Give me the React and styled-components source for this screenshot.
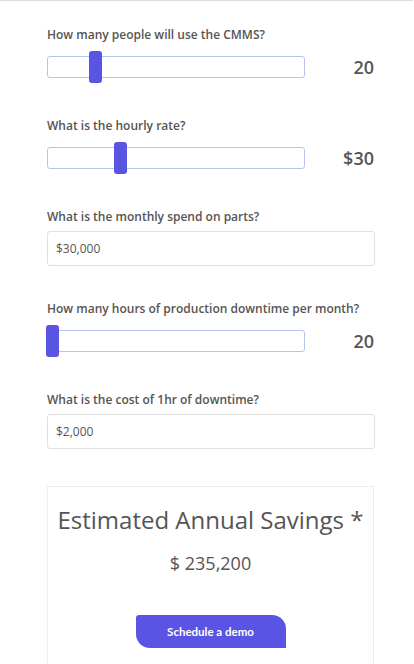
import React from 'react'
import styled, { createGlobalStyle } from 'styled-components'

const GlobalStyle = createGlobalStyle`
  * { box-sizing: border-box; }
  body {
    margin: 0;
    background: #ffffff;
    font-family: "Open Sans", "Noto Sans", sans-serif;
    color: #555555;
  }
`

const fields = [
  { kind: 'slider', label: 'How many people will use the CMMS?', value: '20', pos: 0.176 },
  { kind: 'slider', label: 'What is the hourly rate?', value: '$30', pos: 0.279 },
  { kind: 'input', label: 'What is the monthly spend on parts?', value: '$30,000' },
  { kind: 'slider', label: 'How many hours of production downtime per month?', value: '20', pos: 0 },
  { kind: 'input', label: 'What is the cost of 1hr of downtime?', value: '$2,000' },
]

export default function App() {
  return (
    <>
      <GlobalStyle />
      <Page>
        <Form>
          {fields.map((f) => (
            <Field key={f.label} $slider={f.kind === 'slider'}>
              <Label>{f.label}</Label>
              {f.kind === 'slider' ? (
                <SliderRow>
                  <Track>
                    <Thumb style={{ left: `calc(${f.pos} * (100% - 13px) - 2px)` }} />
                  </Track>
                  <Value>{f.value}</Value>
                </SliderRow>
              ) : (
                <TextInput defaultValue={f.value} />
              )}
            </Field>
          ))}
        </Form>
        <Card>
          <CardTitle>Estimated Annual Savings *</CardTitle>
          <Savings>$ 235,200</Savings>
          <DemoButton>Schedule a demo</DemoButton>
        </Card>
      </Page>
    </>
  )
}

const Page = styled.div`
  height: 664px;
  overflow: hidden;
  border-top: 1px solid #dcdcdc;
  margin-right: 1px;
  padding: 26px 40px 0 47px;
`

const Form = styled.div`
  display: flex;
  flex-direction: column;
  gap: 35px;
  width: 327px;
`

const Field = styled.div`
  display: flex;
  flex-direction: column;
  gap: ${(p) => (p.$slider ? '8px' : '6px')};
`

const Label = styled.div`
  font-size: 12px;
  line-height: 16px;
  font-weight: 600;
  color: #555555;
`

const SliderRow = styled.div`
  display: grid;
  grid-template-columns: 258px 1fr;
  align-items: center;
  height: 32px;
`

const Track = styled.div`
  position: relative;
  height: 22px;
  border: 1px solid #b9c3f0;
  border-radius: 3px;
  background: #ffffff;
`

const Thumb = styled.div`
  position: absolute;
  top: -6px;
  width: 13px;
  height: 32px;
  border-radius: 3px;
  background: #5955e2;
`

const Value = styled.div`
  justify-self: end;
  font-size: 18px;
  font-weight: 600;
  color: #555555;
`

const TextInput = styled.input`
  width: 328px;
  height: 35px;
  padding: 0 8px;
  border: 1px solid #e0e0e0;
  border-radius: 3px;
  font-family: "Open Sans", sans-serif;
  font-size: 12px;
  color: #555555;
  outline: none;
`

const Card = styled.div`
  margin-top: 37px;
  width: 327px;
  height: 200px;
  border: 1px solid #eeeeee;
  display: flex;
  flex-direction: column;
  align-items: center;
  padding-top: 17px;
`

const CardTitle = styled.div`
  font-size: 24px;
  line-height: 32px;
  color: #555555;
`

const Savings = styled.div`
  margin-top: 15px;
  font-size: 18px;
  line-height: 24px;
  color: #555555;
`

const DemoButton = styled.button`
  margin-top: 40px;
  width: 150px;
  height: 33px;
  border: none;
  border-radius: 3px 14px 0 14px;
  background: #5a54e4;
  color: #ffffff;
  font-family: Lato, "Open Sans", sans-serif;
  font-weight: 700;
  font-size: 11.5px;
`
